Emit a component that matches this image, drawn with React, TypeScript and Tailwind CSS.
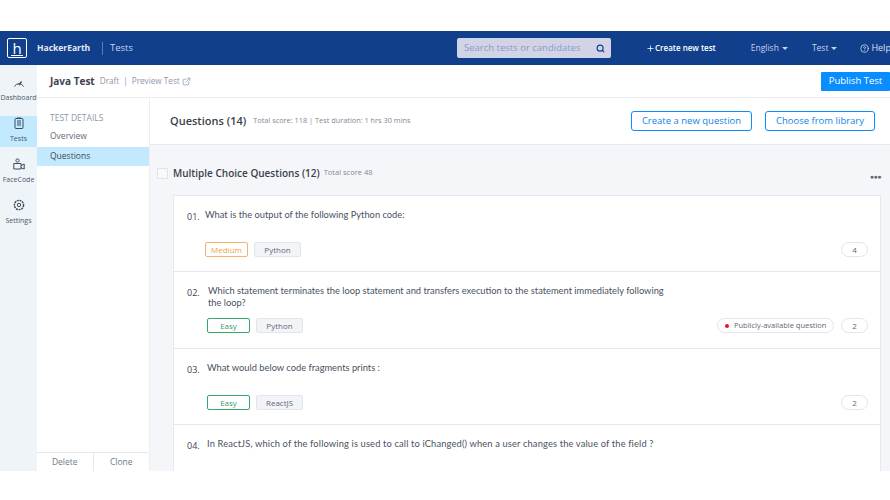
import { Search, Plus, HelpCircle, ExternalLink } from 'lucide-react';

function Caret() {
  return <span className="ml-[3px] inline-block h-0 w-0 border-x-[3px] border-t-[3px] border-x-transparent border-t-current align-middle" />;
}

function GaugeIcon() {
  return (
    <svg width="12" height="10" viewBox="0 0 12 10" fill="none" stroke="#3d4a5c" strokeWidth="1">
      <path d="M1.5 8.5 A5 5 0 0 1 10.5 8.5" />
      <path d="M6 7 L8.5 3.5" strokeWidth="1.3" />
    </svg>
  );
}

function ClipboardIcon() {
  return (
    <svg width="10" height="12" viewBox="0 0 10 12" fill="none" stroke="#3d4a5c" strokeWidth="1">
      <rect x="1" y="1.5" width="8" height="10" rx="1" />
      <path d="M3 1 H7 M3 4 H7 M3 6 H7 M3 8 H7" />
    </svg>
  );
}

function FaceCodeIcon() {
  return (
    <svg width="12" height="12" viewBox="0 0 12 12" fill="none" stroke="#3d4a5c" strokeWidth="1">
      <circle cx="4.5" cy="2.5" r="1.6" />
      <path d="M0.8 11 V5.5 H8 V11 Z" />
      <path d="M8 7.5 L11.2 6 V11 L8 9.8" />
    </svg>
  );
}

function GearIcon() {
  return (
    <svg width="12" height="12" viewBox="0 0 12 12" fill="none" stroke="#3d4a5c">
      <circle cx="6" cy="6" r="4.6" strokeWidth="1.4" strokeDasharray="2 0.7" />
      <circle cx="6" cy="6" r="1.7" strokeWidth="1" />
    </svg>
  );
}

function RailItem({ icon, label, active }: { icon: React.ReactNode; label: string; active?: boolean }) {
  return (
    <div className={`flex h-[31px] flex-col items-center justify-end pb-[4px] ${active ? 'bg-[#c2e9fd]' : ''}`}>
      {icon}
      <span className="mt-[5px] whitespace-nowrap text-[7px] leading-[9px] text-[#4a5668]">{label}</span>
    </div>
  );
}

function Tag({ children, kind }: { children: string; kind: 'medium' | 'easy' | 'plain' }) {
  const cls =
    kind === 'medium'
      ? 'w-[43px] border-[#f3b36b] bg-white text-[#f0a14b]'
      : kind === 'easy'
        ? 'w-[43px] border-[#34a869] bg-white text-[#3a9d63]'
        : 'w-[47px] border-[#e3e5ec] bg-[#f3f4f8] text-[#5f6878]';
  return <span className={`flex h-[15px] items-center justify-center rounded-[2px] border text-[8px] ${cls}`}>{children}</span>;
}

function Score({ value }: { value: number }) {
  return (
    <span className="flex h-[15px] w-[27px] items-center justify-center rounded-full border border-[#e3e5ec] text-[8px] text-[#5f6878]">
      {value}
    </span>
  );
}

function Question({
  num,
  text,
  level,
  topic,
  score,
  isPublic,
  numWidth,
  tagPad,
  height,
}: {
  num: string;
  text: string;
  level: 'medium' | 'easy';
  topic: string;
  score: number;
  isPublic?: boolean;
  numWidth: string;
  tagPad: string;
  height: string;
}) {
  return (
    <div className={`flex ${height} flex-col border-b border-[#e6e8ee] pr-[12px] pt-[13px]`}>
      <div className="flex h-[33px] items-start pl-[13px]">
        <span className={`${numWidth} shrink-0 pt-[2px] text-[9px] leading-[12px] text-[#3d4350]`}>{num}</span>
        <p className='w-[462px] font-["Lato",sans-serif] text-[9.3px] leading-[11.5px] text-[#4a5160]'>{text}</p>
      </div>
      <div className={`flex items-center justify-between ${tagPad}`}>
        <div className="flex gap-[6px]">
          <Tag kind={level}>{level === 'easy' ? 'Easy' : 'Medium'}</Tag>
          <Tag kind="plain">{topic}</Tag>
        </div>
        <div className="flex items-center gap-[7px]">
          {isPublic && (
            <span className="flex h-[15px] w-[117px] items-center whitespace-nowrap rounded-full border border-[#e3e5ec] pl-[7px] text-[7.5px] text-[#5f6878]">
              <span className="mr-[5px] h-[4px] w-[4px] rounded-full bg-[#e8141c]" />
              Publicly-available question
            </span>
          )}
          <Score value={score} />
        </div>
      </div>
    </div>
  );
}

export default function App() {
  return (
    <div className='flex h-[500px] w-[890px] flex-col overflow-hidden bg-white pt-[31px] font-["Open_Sans",sans-serif]'>
      <header className="flex h-[34px] shrink-0 items-center whitespace-nowrap bg-[#123f8c] text-white">
        <div className="ml-[7px] flex h-[20px] w-[20px] shrink-0 items-center justify-center rounded-[2px] border-[1.5px] border-white text-[15px] leading-none">
          <span className="border-b border-white px-[1px] leading-[14px]">h</span>
        </div>
        <span className="ml-[10px] w-[65px] shrink-0 text-[8.5px] font-bold text-[#e6ebf5]">HackerEarth</span>
        <span className="mr-[7px] h-[13px] w-px shrink-0 bg-[#5c7cb4]" />
        <span className="text-[9.5px] text-[#c7d2e8]">Tests</span>
        <div className="ml-[324px] flex h-[20px] w-[154px] shrink-0 items-center justify-between rounded-[2px] bg-[#d0d4e6] pl-[7px] pr-[6px]">
          <span className="text-[9.5px] text-[#8f9ac2]">Search tests or candidates</span>
          <Search size={9} strokeWidth={3} className="text-[#123f8c]" />
        </div>
        <Plus size={9} className="ml-[35px] shrink-0" />
        <span className="text-[8px] font-semibold">Create new test</span>
        <span className="ml-[35px] text-[8.5px] text-[#c7d2e8]">
          English
          <Caret />
        </span>
        <span className="ml-[24px] text-[8.5px] text-[#c7d2e8]">
          Test
          <Caret />
        </span>
        <HelpCircle size={9} className="ml-[23px] shrink-0 text-[#d8e0ef]" />
        <span className="ml-[2px] text-[9px] text-[#d8e0ef]">Help</span>
      </header>

      <div className="flex h-[406px] min-h-0">
        <nav className="flex w-[37px] shrink-0 flex-col bg-[#eff4f9] pt-[10px]">
          <RailItem icon={<GaugeIcon />} label="Dashboard" />
          <div className="mt-[10px]">
            <RailItem active icon={<ClipboardIcon />} label="Tests" />
          </div>
          <div className="mt-[10px]">
            <RailItem icon={<FaceCodeIcon />} label="FaceCode" />
          </div>
          <div className="mt-[10px]">
            <RailItem icon={<GearIcon />} label="Settings" />
          </div>
        </nav>

        <div className="flex min-w-0 flex-1 flex-col">
          <div className="flex h-[33px] shrink-0 items-center border-b border-[#eceef2] pl-[13px]">
            <span className="text-[10px] font-bold text-[#3d4350]">Java Test</span>
            <span className="ml-[5px] text-[8.2px] text-[#8d98ad]">Draft</span>
            <span className="mx-[4px] text-[8.2px] text-[#8d98ad]">|</span>
            <span className="text-[8.2px] text-[#8d98ad]">Preview Test</span>
            <ExternalLink size={9} className="ml-[2px] text-[#8d98ad]" />
            <button className="ml-auto flex h-[19px] w-[69px] items-center justify-center rounded-[1px] bg-[#0a8dff] text-[9.5px] text-white">
              Publish Test
            </button>
          </div>

          <div className="flex min-h-0 flex-1">
            <aside className="flex w-[113px] shrink-0 flex-col border-r border-[#eceef2]">
              <div className="pl-[13px] pt-[14px] text-[8.5px] leading-[12px] text-[#8d98a8]">TEST DETAILS</div>
              <div className="pl-[13px] pt-[6px] text-[8.5px] leading-[12px] text-[#5f6b7a]">Overview</div>
              <div className="mt-[5px] flex h-[19px] items-center bg-[#c2e9fd] pl-[13px] text-[8.5px] text-[#3d4a5c]">Questions</div>
              <div className="mt-auto flex h-[19px] border-t border-[#e6e8ee] text-[8.5px] text-[#6d7a8c]">
                <span className="flex flex-1 items-center justify-center border-r border-[#e6e8ee]">Delete</span>
                <span className="flex flex-1 items-center justify-center">Clone</span>
              </div>
            </aside>

            <main className="flex min-w-0 flex-1 flex-col overflow-hidden bg-[#f5f6f9]">
              <div className="flex h-[47px] shrink-0 items-center border-b border-[#e8eaef] bg-white pl-[20px] pr-[15px]">
                <span className="text-[11px] font-semibold text-[#3a3f4a]">Questions (14)</span>
                <span className="ml-[7px] text-[7.35px] text-[#7f8896]">Total score: 118 | Test duration: 1 hrs 30 mins</span>
                <button className="ml-auto flex h-[20px] w-[121px] items-center justify-center rounded-[3px] border border-[#0a8dff] text-[9.5px] text-[#0f84e8]">
                  Create a new question
                </button>
                <button className="ml-[13px] flex h-[20px] w-[110px] items-center justify-center rounded-[3px] border border-[#0a8dff] text-[9.5px] text-[#0f84e8]">
                  Choose from library
                </button>
              </div>

              <div className="flex h-[50px] shrink-0 items-center pl-[7px] pr-[9px] pt-[6px]">
                <span className="h-[11px] w-[11px] rounded-[1px] border border-[#e0e3ea] bg-[#f8f9fb]" />
                <span className="ml-[5px] text-[10px] font-semibold text-[#3a3f4a]">Multiple Choice Questions (12)</span>
                <span className="ml-[4px] text-[7.5px] text-[#7f8896]">Total score 48</span>
                <span className="ml-auto mt-[6px] text-[7px] font-bold leading-none tracking-[-0.5px] text-[#5f6878]">●●●</span>
              </div>

              <div className="ml-[23px] mr-[9px] flex-1 border-l border-r border-t border-[#e6e8ee] bg-white">
                <Question height="h-[76px]" numWidth="w-[18px]" tagPad="pl-[31px]" num="01." text="What is the output of the following Python code:" level="medium" topic="Python" score={4} />
                <Question
                  height="h-[77px]"
                  numWidth="w-[21px]"
                  tagPad="pl-[33px]"
                  num="02."
                  text="Which statement terminates the loop statement and transfers execution to the statement immediately following the loop?"
                  level="easy"
                  topic="Python"
                  score={2}
                  isPublic
                />
                <Question height="h-[76px]" numWidth="w-[20px]" tagPad="pl-[33px]" num="03." text="What would below code fragments prints :" level="easy" topic="ReactJS" score={2} />
                <div className="flex items-start pl-[13px] pt-[13px]">
                  <span className="w-[20px] shrink-0 pt-[2px] text-[9px] leading-[12px] text-[#3d4350]">04.</span>
                  <p className='font-["Lato",sans-serif] text-[9.3px] leading-[11.5px] tracking-[0.15px] text-[#4a5160]'>
                    In ReactJS, which of the following is used to call to iChanged() when a user changes the value of the field ?
                  </p>
                </div>
              </div>
            </main>
          </div>
        </div>
      </div>
    </div>
  );
}
